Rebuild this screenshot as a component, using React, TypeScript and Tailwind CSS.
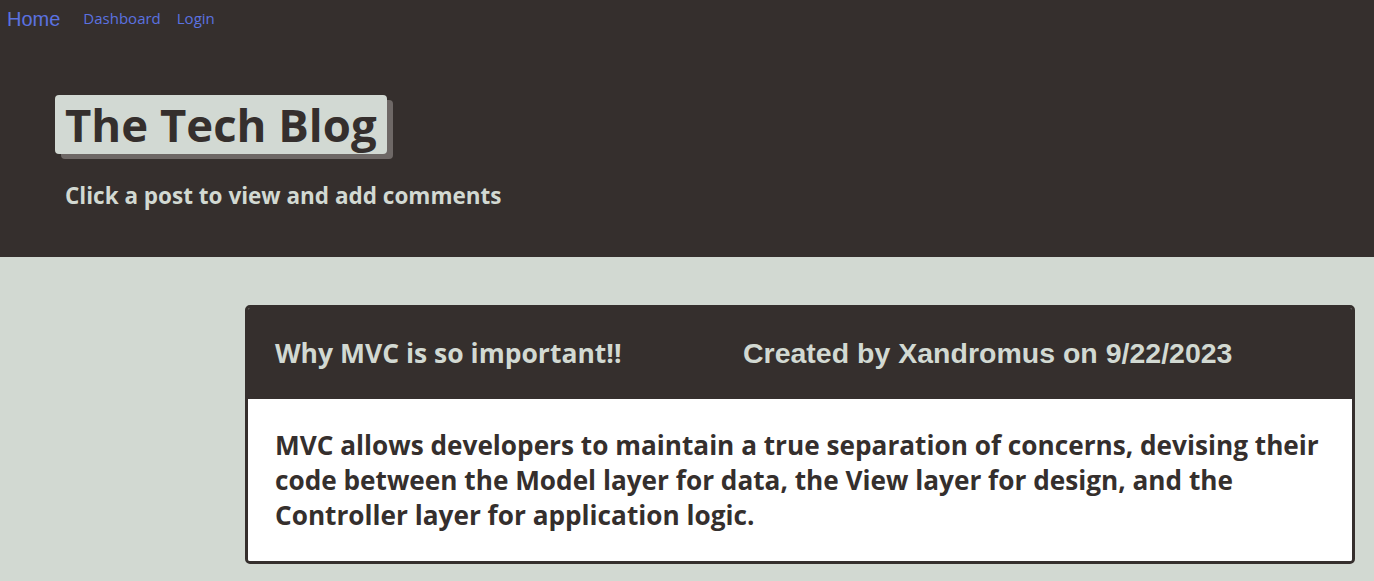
import React from 'react';

const POST = {
  title: 'Why MVC is so important!!',
  author: 'Xandromus',
  date: '9/22/2023',
  body: 'MVC allows developers to maintain a true separation of concerns, devising their code between the Model layer for data, the View layer for design, and the Controller layer for application logic.',
};

const plex = "font-['Open_Sans','Noto_Sans',sans-serif]";

export default function App() {
  return (
    <div className={`min-h-[581px] bg-[#d2d9d2] ${plex}`}>
      <header className="bg-[#352f2d] h-[257px] flex flex-col">
        <nav className="flex items-center h-[37px] pl-[7px]">
          <a className="text-[20px] text-[#5b72e0] font-['Liberation_Sans',sans-serif] mr-[23px]">Home</a>
          <a className="text-[15px] text-[#5b72e0] mr-[16px]">Dashboard</a>
          <a className="text-[15px] text-[#5b72e0]">Login</a>
        </nav>
        <div className="pl-[55px] pt-[58px]">
          <h1 className="inline-block bg-[#d2d9d3] text-[#352f2d] text-[45.5px] leading-[59px] font-bold px-[10px] rounded-[4px] shadow-[6px_5px_0_#6e6866]">
            The Tech Blog
          </h1>
          <p className="pl-[10px] mt-[25px] text-[22.5px] font-bold text-[#d2d9d2]">Click a post to view and add comments</p>
        </div>
      </header>
      <main className="pt-[48px] pl-[245px] pr-[19px]">
        <article className="border-[3px] border-[#352f2d] rounded-[5px] overflow-hidden">
          <div className="bg-[#352f2d] h-[91px] flex items-center pl-[27px] text-[26.5px] font-bold text-[#d2d9d2]">
            <span className="w-[468px]">{POST.title}</span>
            <span className="font-['Liberation_Sans_Narrow','Liberation_Sans',sans-serif] text-[28.5px]">Created by {POST.author} on {POST.date}</span>
          </div>
          <div className="bg-white pl-[27px] pr-[24px] pt-[29px] pb-[28px]">
            <p className="text-[26.2px] leading-[35px] font-bold text-[#352f2d]">{POST.body}</p>
          </div>
        </article>
      </main>
    </div>
  );
}
